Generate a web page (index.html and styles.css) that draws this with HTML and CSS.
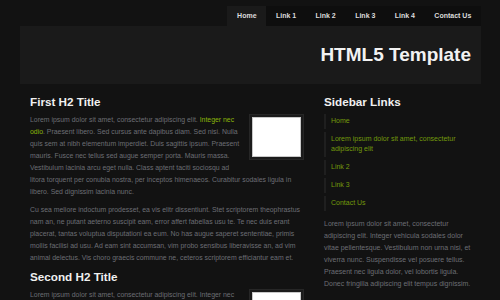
FILE: index.html
```html
<!DOCTYPE html>
<html lang="en">
<head>
  <meta charset="UTF-8">
  <meta name="viewport" content="width=device-width, initial-scale=1.0">
  <title>HTML5 Template</title>
  <link rel="stylesheet" href="styles.css">
</head>
<body>
  <div id="wrapper">
    <nav id="topnav">
      <ul>
        <li><a href="#" class="active">Home</a></li>
        <li><a href="#">Link 1</a></li>
        <li><a href="#">Link 2</a></li>
        <li><a href="#">Link 3</a></li>
        <li><a href="#">Link 4</a></li>
        <li><a href="#">Contact Us</a></li>
      </ul>
    </nav>

    <header id="header">
      <h1>HTML5 Template</h1>
    </header>

    <div id="content">
      <main id="main">
        <h2>First H2 Title</h2>
        <p><span class="thumb"><span class="thumb-img"></span></span>Lorem ipsum dolor sit amet, consectetur adipiscing elit. <a href="#">Integer nec odio</a>. Praesent libero. Sed cursus ante dapibus diam. Sed nisi. Nulla quis sem at nibh elementum imperdiet. Duis sagittis ipsum. Praesent mauris. Fusce nec tellus sed augue semper porta. Mauris massa. Vestibulum lacinia arcu eget nulla. Class aptent taciti sociosqu ad litora torquent per conubia nostra, per inceptos himenaeos. Curabitur sodales ligula in libero. Sed dignissim lacinia nunc.</p>
        <p>Cu sea meliore indoctum prodesset, ea vis elitr dissentiunt. Stet scriptorem theophrastus nam an, ne putant aeterno suscipit eam, error affert fabellas usu te. Te nec duis erant placerat, tantas voluptua disputationi ea eum. No has augue saperet sententiae, primis mollis facilisi ad usu. Ad eam sint accumsan, vim probo sensibus liberavisse an, ad vim animal delectus. Vis choro graecis commune ne, ceteros scriptorem efficiantur eam et.</p>

        <h2>Second H2 Title</h2>
        <p><span class="thumb"><span class="thumb-img"></span></span>Lorem ipsum dolor sit amet, consectetur adipiscing elit. Integer nec odio. Praesent libero. Sed cursus ante dapibus diam. Sed nisi. Nulla quis sem at nibh elementum imperdiet. Duis sagittis ipsum. Praesent mauris.</p>
      </main>

      <aside id="sidebar">
        <h2>Sidebar Links</h2>
        <ul>
          <li><a href="#">Home</a></li>
          <li><a href="#">Lorem ipsum dolor sit amet, consectetur adipiscing elit</a></li>
          <li><a href="#">Link 2</a></li>
          <li><a href="#">Link 3</a></li>
          <li><a href="#">Contact Us</a></li>
        </ul>
        <p>Lorem ipsum dolor sit amet, consectetur adipiscing elit. Integer vehicula sodales dolor vitae pellentesque. Vestibulum non urna nisi, et viverra nunc. Suspendisse vel posuere tellus. Praesent nec ligula dolor, vel lobortis ligula. Donec fringilla adipiscing elit tempus dignissim.</p>
      </aside>
    </div>
  </div>
</body>
</html>
```

FILE: styles.css
```css
body {
  margin: 0;
  background-color: #121212;
  font-family: "Liberation Sans", Arial, sans-serif;
  color: #6c6e74;
}

#wrapper {
  width: 461px;
  margin-left: 20px;
}

/* Top navigation */
#topnav {
  display: flex;
  justify-content: flex-end;
  padding-top: 6px;
}

#topnav ul {
  display: flex;
  margin: 0;
  padding: 0;
  list-style: none;
  background-color: #0e0e0e;
}

#topnav a {
  display: block;
  padding: 0 9.7px;
  line-height: 20px;
  font-size: 7px;
  font-weight: bold;
  color: #dcdcdc;
  text-decoration: none;
}

#topnav a.active {
  background-color: #1a1a1a;
}

/* Header */
#header {
  height: 58px;
  box-sizing: border-box;
  padding: 18px 10px 0 0;
  background-color: #1a1a1a;
  text-align: right;
}

#header h1 {
  margin: 0;
  font-size: 19px;
  line-height: 22px;
  color: #f2f2f2;
}

/* Content columns */
#content {
  display: flex;
  gap: 20px;
  padding: 11px 10px 0;
}

#main {
  width: 274px;
}

#sidebar {
  width: 147px;
}

h2 {
  margin: 0 0 4.8px;
  font-size: 11.7px;
  line-height: 14px;
  color: #f0f0f0;
}

p {
  margin: 0 0 6px;
  font-size: 7px;
  line-height: 12px;
}

#main p {
  font-size: 6.9px;
}

p a {
  color: #8ab40a;
  text-decoration: none;
}

.thumb {
  float: right;
  margin: 0 0 8px 6px;
  padding: 2px;
  border: 1px solid #262626;
  background-color: #1b1b1b;
}

.thumb-img {
  display: block;
  width: 49px;
  height: 40px;
  box-sizing: border-box;
  border: 1px solid #c8c8c8;
  background-color: #fff;
}

/* Sidebar links */
#sidebar ul {
  margin: 0 0 7.4px;
  padding: 0;
  list-style: none;
}

#sidebar li {
  margin-bottom: 2.7px;
  padding: 2.65px 0 2.65px 5px;
  border-left: 2px solid #1f1f1f;
  font-size: 7px;
  line-height: 10px;
}

#sidebar li a {
  color: #739a0c;
  text-decoration: none;
}
```
